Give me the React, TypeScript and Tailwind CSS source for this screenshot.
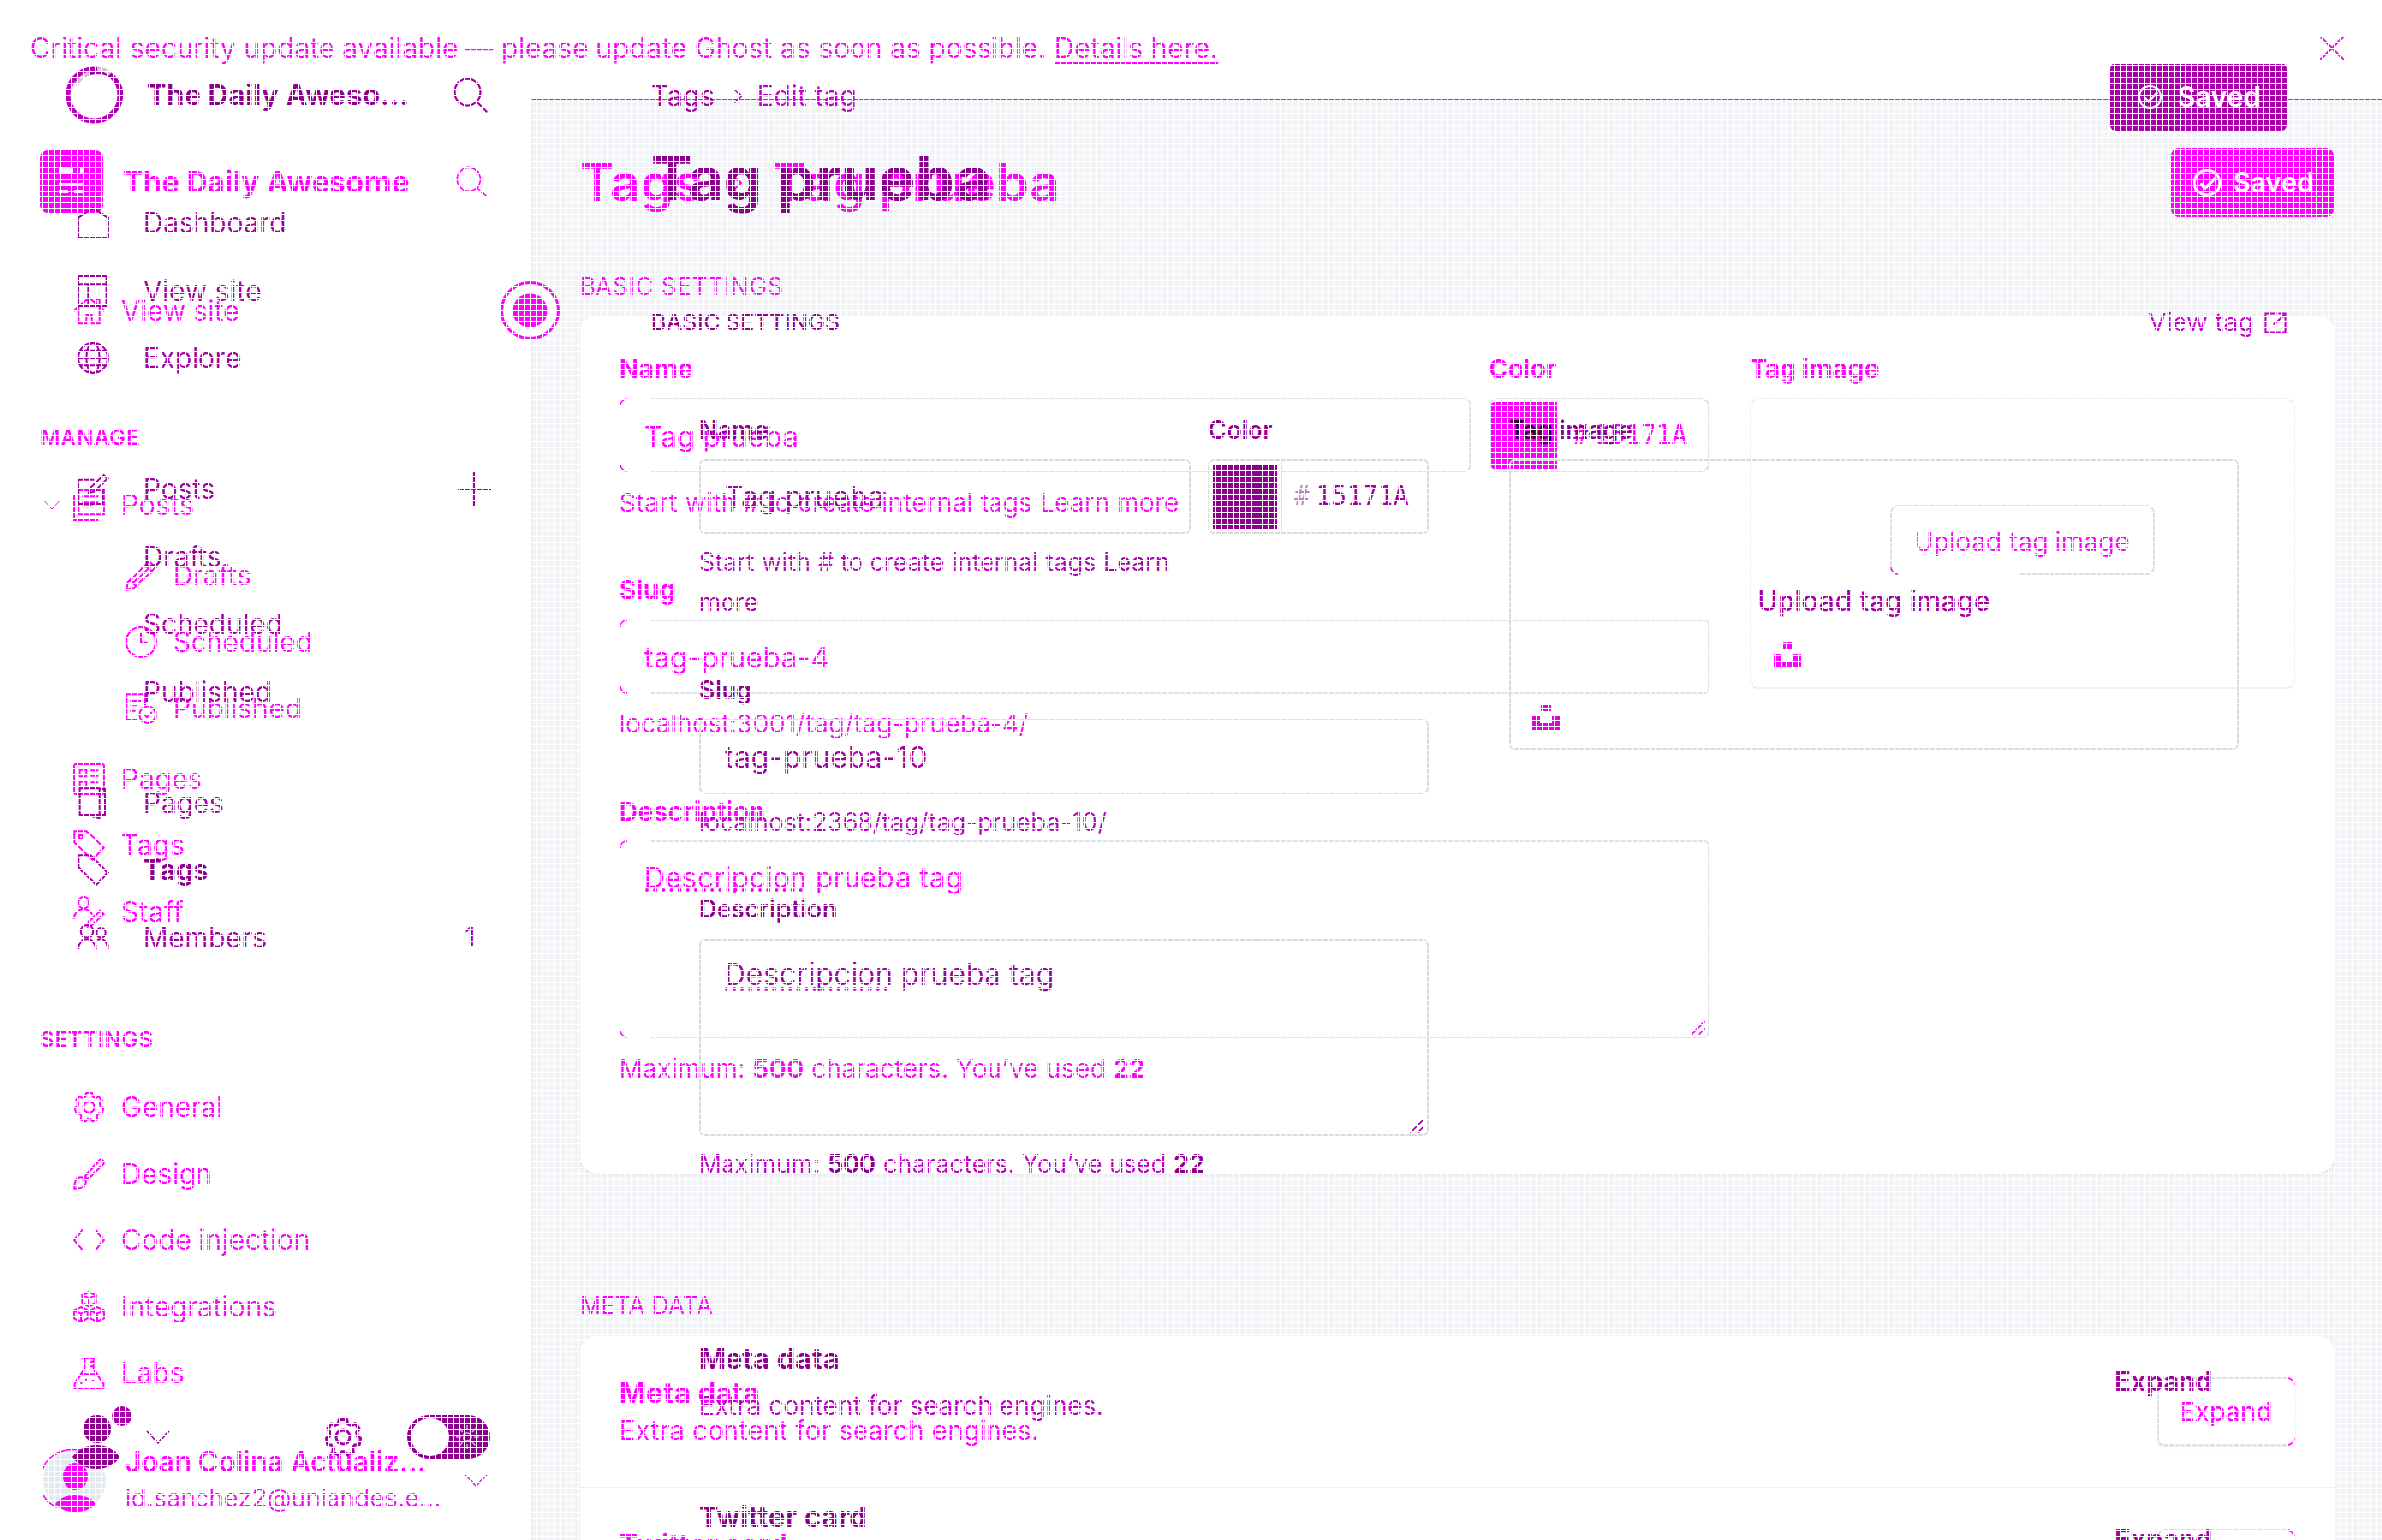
import React from "react";

type Kids = { children?: React.ReactNode };

function Icon({ children, className = "size-8", sw = 1.5 }: Kids & { className?: string; sw?: number }) {
  return (
    <svg viewBox="0 0 24 24" fill="none" stroke="currentColor" strokeWidth={sw} className={`shrink-0 ${className}`} aria-hidden="true">
      {children}
    </svg>
  );
}

const gearPath =
  "M9.8 1.5h4.4l.6 2.6 2.2 1 2.4-1.2 2.3 3.2-1.5 2 .4 2.3 2 1.3-.9 3.9-2.7.2-1.3 1.8.5 2.6-3.5 1.6-1.9-2h-1.6l-1.9 2-3.5-1.6.5-2.6-1.3-1.8-2.7-.2-.9-3.9 2-1.3.4-2.3-1.5-2 2.3-3.2 2.4 1.2 2.2-1z";

const icons = {
  search: <><circle cx="10" cy="10" r="9" /><path d="M16.500 16.500 23.500 23.500" /></>,
  home: <path d="M.8 8v15.200h22.400V8L12 .8z" />,
  house: <><path d="M.5 12 12 2l11.500 10" /><path d="M4 9.500V22h6v-7h4v7h6V9.500M17 6V3h3v5" /></>,
  layout: <><path d="M.8.8h21.400v22.400H.8zM.8 7h21.400M8.500 7v16" /></>,
  globe: <><circle cx="12" cy="12" r="11.200" /><ellipse cx="12" cy="12" rx="5" ry="11.200" /><path d="M1 12h22M2 6.500h20M2 17.500h20" /></>,
  compose: <><path d="M13 5H.8v18.200H19V12" /><path d="m9 15 1-4L20 1.500l3 2.500L13 14z" /></>,
  posts: <><path d="M4 .8h19.200V19H4zM.8 4v19.200H19M7 5.500h12M7 10h12M7 13h8" /></>,
  pencil: <><path d="M1 23l1-5.500L18 1l5 4.500L6.500 22zM4 16l4 4M15 4l5 4.500M6 18 19 5" /></>,
  clock: <><circle cx="12" cy="12" r="11.200" /><path d="M12 5v7.500h5" /></>,
  published: <><path d="M10 21H1V1h14v8M4 6h8M4 10h6M4 14h4" /><circle cx="17" cy="17" r="6.200" /><path d="m14.500 17 2 2 3.500-4" /></>,
  pagesList: <><rect x=".8" y=".8" width="22.400" height="22.400" rx="1.500" /><path d="M5 5h5v5H5zM5 14h5v5H5zM13 5.500h6M13 9.500h6M13 14.500h6M13 18.500h6" /></>,
  book: <><path d="M2 1h15v20H2z" /><path d="M8 21l9 2.500V21M17 1.500h4V21h-4" /></>,
  tag: <><path d="M1 1h9l13 13-8.500 9L1 10z" /></>,
  tagDot: <><path d="M1 1h9l13 13-8.500 9L1 10z" /><path d="M4.500 4.500h3v3h-3z" /></>,
  staff: <><circle cx="8" cy="5" r="4.200" /><path d="M.8 17c0-4 3-7 7-7 3 0 5.500 1.500 6.500 4M11 23l1-4 8.500-8 2.500 2.500-8.500 8z" /></>,
  members: <><circle cx="7.500" cy="7" r="4.700" /><circle cx="18" cy="8" r="3.500" /><path d="M.8 20.500c0-4.500 3-7.500 6.700-7.500s6.700 3 6.700 7.500M15 13.500c4.500-2 8.200 1.500 8.200 6.500" /></>,
  gear: <><path d={gearPath} strokeLinejoin="round" /><circle cx="12" cy="12" r="4.200" /></>,
  brush: <><path d="M1 23c0-5 1.500-8.500 5-8.500s4.500 4 2.500 6.500C7 23 4 23 1 23zM9 13.500 20 1.500c1-1 4 1 2.700 3L11 16z" /></>,
  code: <path d="M7.500 4 .8 12l6.700 8M16.500 4l6.700 8-6.700 8" />,
  blocks: <><path d="M12 .8 17 3v6l-5 2.500L7 9V3zM7 3l5 2.500L17 3M12 5.500v6M6 12l5 2.500v6L6 23.200.8 20.500v-6zM.8 14.500 6 17l5-2.500M6 17v6M18 12l5.200 2.500v6L18 23.200l-5-2.700v-6zM13 14.500l5 2.500 5.200-2.500M18 17v6" /></>,
  flask: <><path d="M6.500.8h11M8.500.8V9L1.200 20v3.200h21.600V20L15.500 9V.8M6 13h12M12 3.500h3M12 7h3M9 17h1.500M14 18h2M5.500 19.500H7" /></>,
  chevron: <path d="m1 6 11 12L23 6" />,
  check: <><circle cx="12" cy="12" r="11" /><path d="m6.500 12.500 4 4 9-9" /></>,
};

function Ring() {
  return (
    <svg viewBox="0 0 60 58" className="h-[58px] w-[60px] shrink-0" fill="none" stroke="#b800b8" aria-hidden="true">
      <circle cx="29" cy="29" r="26" strokeWidth="5" />
      <path d="M11 18C18 4 40 2 51 14c8 10 7 24-4 34" strokeWidth="4" stroke="#a000a8" />
      <path d="M32 3c6 0 10 2 13 5M12 18c3-6 7-9 12-11" strokeWidth="4" stroke="#d0c8d0" />
    </svg>
  );
}

function Arc({ className }: { className: string }) {
  return (
    <svg viewBox="0 0 8 8" className={`absolute size-2 ${className}`} fill="none" stroke="#ff00ff" strokeWidth="1.500" aria-hidden="true">
      <path d="M1 8C1 4 4 1 8 1" />
    </svg>
  );
}

function OpenFrame({ children, className }: Kids & { className: string }) {
  return (
    <div className={`relative flex ${className}`}>
      <div className="w-8 shrink-0" />
      <div className="flex-1 rounded-r-md border-2 border-l-0 border-[#dae3e9]" />
      <Arc className="left-0 top-0" />
      <Arc className="bottom-0 left-0 -scale-y-100" />
      {children}
    </div>
  );
}

function ARow({ icon, label, sub, chevron }: { icon: React.ReactNode; label: string; sub?: boolean; chevron?: boolean }) {
  return (
    <a href="#" className={`flex h-[67px] items-center gap-4 ${sub ? "pl-[126px]" : chevron ? "pl-11" : "pl-[74px]"}`}>
      {chevron && <Icon className="-mr-0.5 size-4" sw={1.5}>{icons.chevron}</Icon>}
      <Icon>{icon}</Icon>
      <span>{label}</span>
    </a>
  );
}

function BRow({ icon, label, bold, end }: { icon?: React.ReactNode; label: string; bold?: boolean; end?: React.ReactNode }) {
  return (
    <div className="flex h-[68px] items-center pl-[78px] pr-10">
      <a href="#" className="flex flex-1 items-center">
        <span className="w-[66px]">{icon && <Icon>{icon}</Icon>}</span>
        <span className={bold ? "font-bold text-[#8b008b]" : ""}>{label}</span>
      </a>
      {end}
    </div>
  );
}

function SidebarA() {
  return (
    <aside className="relative flex w-[535px] shrink-0 flex-col bg-white">
      <header className="mt-[51px] flex h-16 items-center pl-10 pr-11">
        <svg viewBox="0 0 64 64" className="size-16 shrink-0" aria-hidden="true">
          <rect width="64" height="64" rx="8" fill="#ff00ff" />
          <path d="M19 18h15v6H19zM41 18h3v6h-3zM19 33h25v2H19zM19 40h10v4H19zM35 40h9v4h-9z" fill="#f4f5f7" />
        </svg>
        <h2 className="ml-5 flex-1 whitespace-nowrap text-[30px] font-bold">The Daily Awesome</h2>
        <button aria-label="Search"><Icon sw={1.2}>{icons.search}</Icon></button>
      </header>
      <nav className="mt-16 text-[28px]">
        <ARow icon={icons.house} label="View site" />
        <h3 className="mb-[23px] mt-[82px] pl-10 text-[22px] font-semibold uppercase leading-6 tracking-wide">Manage</h3>
        <ARow icon={icons.posts} label="Posts" chevron />
        <div className="my-1">
          <ARow icon={icons.pencil} label="Drafts" sub />
          <ARow icon={icons.clock} label="Scheduled" sub />
          <ARow icon={icons.published} label="Published" sub />
        </div>
        <ARow icon={icons.pagesList} label="Pages" />
        <ARow icon={icons.tagDot} label="Tags" />
        <ARow icon={icons.staff} label="Staff" />
        <h3 className="mb-[23px] mt-[83px] pl-10 text-[22px] font-semibold uppercase leading-6 tracking-wide">Settings</h3>
        <ARow icon={icons.gear} label="General" />
        <ARow icon={icons.brush} label="Design" />
        <ARow icon={icons.code} label="Code injection" />
        <ARow icon={icons.blocks} label="Integrations" />
        <ARow icon={icons.flask} label="Labs" />
      </nav>
      <button className="mb-[23px] mt-auto flex items-center pl-[43px] pr-[43px] text-left">
        <svg viewBox="0 0 65 65" className="size-[65px] shrink-0" aria-hidden="true">
          <circle cx="32" cy="32" r="32" fill="#e4ebf0" />
          <path d="M40 1C-9-6-14 50 14 59" fill="none" stroke="#ff00ff" strokeWidth="1.500" />
          <ellipse cx="33" cy="28" rx="13" ry="14" fill="#ff00ff" />
          <path d="M12 56c8-12 34-12 42 0-10 11-32 11-42 0z" fill="#ff00ff" />
        </svg>
        <span className="ml-[18px] flex-1">
          <span className="block text-[28px] font-semibold leading-[37px]">Joan Colina Actualiz...</span>
          <span className="block text-[25px] leading-[37px]">id.sanchez2@uniandes.e...</span>
        </span>
        <Icon className="size-6" sw={1.5}>{icons.chevron}</Icon>
      </button>
      <svg viewBox="0 0 60 60" className="absolute right-[-29px] top-[183px] z-10 size-[60px]" aria-hidden="true">
        <circle cx="30" cy="30" r="28.500" fill="#fff" stroke="#ff00ff" strokeWidth="3" />
        <circle cx="30" cy="30" r="17.500" fill="#ff00ff" />
      </svg>
    </aside>
  );
}

const labelA = "block text-[26px] font-bold leading-[26px]";
const hintA = "mt-[18px] whitespace-nowrap text-[26px] leading-[26px]";
const fieldA = "absolute inset-0 size-full bg-transparent px-[25px] text-[29px] outline-none";

function MetaRowA({ title, text }: { title: string; text: string }) {
  return (
    <div className="flex items-start justify-between border-b-2 border-[#e8eef3] px-10 pb-[42px] pt-10">
      <div>
        <h4 className="text-[29px] font-bold leading-8">{title}</h4>
        <p className="mt-2 text-[27px] leading-7">{text}</p>
      </div>
      <button className="relative h-[69px] w-[139px] rounded-lg border-2 border-r-white border-[#dbe1e5] text-[26px] font-medium shadow-sm">
        Expand
        <Arc className="-right-0.5 -top-0.5 -scale-x-100" />
        <Arc className="-bottom-0.5 -right-0.5 rotate-180" />
      </button>
    </div>
  );
}

function MainA() {
  return (
    <main className="min-w-0 flex-1 border-l border-t border-l-[#e5e8ee] border-t-[#ff00ff] bg-[#f1f3f6] px-12">
      <header className="mt-12 flex h-[70px] items-center justify-between">
        <h1 className="flex items-center whitespace-nowrap text-[53px] font-semibold leading-[68px]">
          <a href="#">Tags</a>
          <Icon className="mx-[27px] size-4 -rotate-90" sw={3}>{icons.chevron}</Icon>
          Tag prueba
        </h1>
        <button className="flex h-[70px] w-[165px] items-center gap-3 rounded-lg bg-[#ff00ff] pl-[23px] text-[27px] font-semibold text-white">
          <Icon className="size-7" sw={2.5}>{icons.check}</Icon>Saved
        </button>
      </header>
      <h3 className="mt-[58px] text-[24px] uppercase leading-6 tracking-wide">Basic settings</h3>
      <section className="mt-[17px] grid grid-cols-[2fr_1fr] gap-10 rounded-2xl bg-white px-10 pb-[92px] pt-[41px] shadow-sm">
        <div>
          <div className="flex gap-[18px]">
            <div className="min-w-0 flex-1">
              <label htmlFor="a-name" className={labelA}>Name</label>
              <OpenFrame className="mt-4 h-[75px]">
                <input id="a-name" defaultValue="Tag prueba" className={`pt-0.5 ${fieldA}`} />
              </OpenFrame>
            </div>
            <div className="w-[223px]">
              <label htmlFor="a-color" className={labelA}>Color</label>
              <div className="mt-4 flex h-[75px] items-center rounded-lg border-2 border-[#dae3e9] font-['DejaVu_Sans_Mono',monospace] text-[26px]">
                <span className="mr-[3px] h-[68px] w-[67px] rounded-l bg-[#ff00ff]" />
                <span className="flex h-full items-center border-l border-[#dae3e9] pl-3">#</span>
                <input id="a-color" defaultValue="15171A" className="ml-1.5 w-24 bg-transparent outline-none" />
              </div>
            </div>
          </div>
          <p className={hintA}>Start with # to create internal tags <a href="#">Learn more</a></p>
          <label htmlFor="a-slug" className={`mt-[62px] ${labelA}`}>Slug</label>
          <OpenFrame className="mt-4 h-[75px]">
            <input id="a-slug" defaultValue="tag-prueba-4" className={`pt-0.5 ${fieldA}`} />
          </OpenFrame>
          <p className={hintA}>localhost:3001/tag/tag-prueba-4/</p>
          <label htmlFor="a-desc" className={`mt-[62px] ${labelA}`}>Description</label>
          <OpenFrame className="mt-4 h-[199px]">
            <textarea id="a-desc" defaultValue="Descripcion prueba tag" spellCheck={false} className={`resize-none pt-[19px] leading-[38px] ${fieldA}`} />
            <span className="absolute left-[26px] top-[48px] w-[159px] border-b-4 border-dotted border-[#ff00ff]" />
            <Icon className="absolute bottom-0.5 right-1 size-4" sw={2.5}><path d="M2 22 22 2M13 22l9-9" /></Icon>
          </OpenFrame>
          <p className={hintA}>Maximum: <b className="font-bold">500</b> characters. You’ve used <b className="font-bold">22</b></p>
        </div>
        <div>
          <h4 className={labelA}>Tag image</h4>
          <div className="relative mt-4 flex h-[293px] justify-center rounded-lg border-2 border-[#e8eef3]">
            <button className="relative mt-[106px] h-[70px] w-[267px] rounded-lg border-2 border-[#d8e0e6] pt-0.5 text-[26px]">
              Upload tag image
              <span className="absolute -bottom-0.5 -left-0.5 h-2 w-[130px] bg-white" />
              <Arc className="-bottom-0.5 -left-0.5 -scale-y-100" />
            </button>
            <svg viewBox="0 0 28 26" className="absolute bottom-[19px] left-[22px] h-[26px] w-7" fill="#ff00ff" aria-hidden="true">
              <path d="M9 0h10v7H9zM0 12h8v7h12v-7h8v14H0z" />
            </svg>
          </div>
        </div>
      </section>
      <h3 className="mt-[122px] text-[24px] uppercase leading-6">Meta data</h3>
      <section className="mt-[18px] rounded-t-2xl bg-white pt-0.5 shadow-sm">
        <MetaRowA title="Meta data" text="Extra content for search engines." />
        <MetaRowA title="Twitter card" text="Customized structured data for Twitter" />
      </section>
    </main>
  );
}

function SidebarB() {
  return (
    <aside className="flex w-[535px] shrink-0 flex-col text-[#a000a0]">
      <header className="mt-[67px] flex h-[58px] items-center pl-[66px] pr-[43px]">
        <Ring />
        <h2 className="ml-[22px] flex-1 whitespace-nowrap text-[29px] font-bold text-[#8b008b]">The Daily Aweso...</h2>
        <button aria-label="Search"><Icon className="size-9">{icons.search}</Icon></button>
      </header>
      <nav className="mt-[66px] text-[28px]">
        <BRow icon={icons.home} label="Dashboard" />
        <BRow icon={icons.layout} label="View site" />
        <BRow icon={icons.globe} label="Explore" />
        <div className="mb-11 mt-16">
          <BRow
            icon={icons.compose}
            label="Posts"
            end={<button aria-label="New post"><Icon className="size-[34px]" sw={1.5}><path d="M12 0v24M0 12h24" /></Icon></button>}
          />
          <BRow label="Drafts" />
          <BRow label="Scheduled" />
          <BRow label="Published" />
        </div>
        <BRow icon={icons.book} label="Pages" />
        <BRow icon={icons.tag} label="Tags" bold />
        <BRow icon={icons.members} label="Members" end={<span className="mr-4 text-[25px] font-medium">1</span>} />
      </nav>
      <footer className="mb-[72px] mt-auto flex h-16 items-center pl-[73px] text-[#8b008b]">
        <button className="flex items-center" aria-label="Account menu">
          <svg viewBox="0 0 62 64" className="h-16 w-[62px]" fill="currentColor" aria-hidden="true">
            <circle cx="25" cy="24" r="14" />
            <circle cx="50" cy="11" r="10" fill="#a800a8" />
            <path d="M0 52c12-16 37-16 48 0-11 16-36 16-48 0z" />
          </svg>
          <Icon className="ml-3 size-6" sw={1.5}>{icons.chevron}</Icon>
        </button>
        <button aria-label="Settings" className="ml-[155px]"><Icon className="size-10 text-[#a000a0]" sw={1.8}>{icons.gear}</Icon></button>
        <label className="relative ml-11 flex h-11 w-[84px] items-center rounded-full bg-[#8b008b]">
          <input type="checkbox" role="switch" aria-label="Dark mode" className="peer absolute inset-0 appearance-none" />
          <span className="ml-1 size-[38px] rounded-full bg-white" />
          <Icon className="ml-[7px] size-6 text-[#d8b0d8]" sw={1.5}>
            <circle cx="12" cy="12" r="4" />
            <path d="M12 0v5M12 19v5M0 12h5M19 12h5M3.500 3.500 7 7M17 17l3.500 3.500M3.500 20.500 7 17M17 7l3.500-3.500" />
          </Icon>
        </label>
      </footer>
    </aside>
  );
}

const labelB = "block text-[25px] font-semibold leading-[26px] text-[#8b008b]";
const hintB = "mt-2 text-[25px] leading-[41px] text-[#b800c0]";
const fieldB = "mt-[17px] block h-[75px] w-full rounded-md border-2 border-[#dcdcdc] bg-transparent px-6 text-[30px] text-[#a000a0] outline-none";

function MetaRowB({ title, text }: { title: string; text: string }) {
  return (
    <div className="flex h-[159px] items-start justify-between">
      <div>
        <h4 className="text-[29px] font-bold leading-8 text-[#8b008b]">{title}</h4>
        <p className="mt-[17px] text-[26px] leading-7 text-[#b800c0]">{text}</p>
      </div>
      <button className="mr-[27px] mt-[23px] text-[27px] font-bold leading-8">Expand</button>
    </div>
  );
}

function MainB() {
  return (
    <main className="min-w-0 flex-1 pl-[121px] pr-24 pt-16 text-[#a000a0]">
      <header className="flex h-[68px] items-center justify-between">
        <nav className="flex items-center pb-0.5 text-[28px]">
          <a href="#">Tags</a>
          <Icon className="ml-[17px] mr-3 size-[14px] -rotate-90" sw={2.5}>{icons.chevron}</Icon>
          <span className="text-[#c000c8]">Edit tag</span>
        </nav>
        <button className="flex h-[68px] w-[178px] items-center gap-4 rounded-md bg-[#a800a8] pl-7 text-[28px] font-semibold text-white">
          <Icon className="size-6" sw={2}>{icons.check}</Icon>Saved
        </button>
      </header>
      <h1 className="mt-[17px] whitespace-nowrap text-[62px] font-bold leading-[62px] text-[#8b008b]">Tag prueba</h1>
      <div className="mt-[102px] flex items-center justify-between leading-6">
        <h3 className="text-[23px] font-medium uppercase text-[#8b008b]">Basic settings</h3>
        <a href="#" className="flex items-center gap-2.5 text-[26px] text-[#c000c8]">
          View tag
          <Icon className="size-[23px]" sw={2.2}><path d="M13 1.500H1.500v21h21V11M15 1.500h7.500V9M22 2 10 14" /></Icon>
        </a>
      </div>
      <section className="px-12">
        <div className="mt-[83px] grid grid-cols-2 gap-20">
          <div>
            <div className="flex gap-[17px]">
              <div className="min-w-0 flex-1">
                <label htmlFor="b-name" className={labelB}>Name</label>
                <input id="b-name" defaultValue="Tag prueba" className={fieldB} />
                <p className={hintB}>Start with # to create internal tags <a href="#" className="text-[#a000a0]">Learn more</a></p>
              </div>
              <div className="w-[223px]">
                <label htmlFor="b-color" className={labelB}>Color</label>
                <div className="mt-[17px] flex h-[75px] items-center rounded-md border-2 border-[#dcdcdc] font-['DejaVu_Sans_Mono',monospace] text-[26px]">
                  <span className="ml-[3px] mr-1 h-16 w-[65px] bg-[#8b008b]" />
                  <span className="flex h-full items-center border-l border-[#dcdcdc] pl-3 text-[#c080c0]">#</span>
                  <input id="b-color" defaultValue="15171A" className="ml-1.5 w-24 bg-transparent outline-none" />
                </div>
              </div>
            </div>
            <label htmlFor="b-slug" className={`mt-[54px] ${labelB}`}>Slug</label>
            <input id="b-slug" defaultValue="tag-prueba-10" className={fieldB} />
            <p className={hintB}>localhost:2368/tag/tag-prueba-10/</p>
            <label htmlFor="b-desc" className={`mt-[54px] ${labelB}`}>Description</label>
            <div className="relative mt-[17px] h-[199px]">
              <textarea id="b-desc" defaultValue="Descripcion prueba tag" spellCheck={false} className="block size-full resize-none rounded-md border-2 border-[#dcdcdc] bg-transparent px-6 pt-[15px] text-[30px] leading-[38px] outline-none" />
              <span className="absolute left-[26px] top-[49px] w-[165px] border-b-4 border-dotted border-[#e000e0]" />
              <Icon className="absolute bottom-0.5 right-1 size-4" sw={2.5}><path d="M2 22 22 2M13 22l9-9" /></Icon>
            </div>
            <p className={hintB}>Maximum: <b className="font-bold text-[#8b008b]">500</b> characters. You’ve used <b className="font-bold text-[#8b008b]">22</b></p>
          </div>
          <div>
            <h4 className={labelB}><span className="text-[#240024]">Tag</span> image</h4>
            <div className="relative mt-[17px] h-[293px] rounded-md border-2 border-[#dcdcdc] pt-[120px] text-center text-[28px]">
              <button className="font-medium leading-8">Upload tag image</button>
              <svg viewBox="0 0 28 26" className="absolute bottom-[18px] left-[22px] h-[26px] w-7" fill="#e000e0" aria-hidden="true">
                <path d="M9 0h10v7H9zM0 12h8v7h12v-7h8v14H0z" />
              </svg>
            </div>
          </div>
        </div>
        <div className="mt-40">
          <MetaRowB title="Meta data" text="Extra content for search engines." />
          <MetaRowB title="Twitter card" text="Customized structured data for Twitter" />
        </div>
      </section>
    </main>
  );
}

export default function App() {
  return (
    <div className="relative grid h-screen grid-cols-1 grid-rows-1 overflow-hidden bg-white font-['Inter',sans-serif]">
      <div className="col-start-1 row-start-1 flex h-screen flex-col text-[#ff00ff]">
        <div className="flex h-[100px] shrink-0 items-center justify-between pb-1 pl-[30px] pr-[38px] text-[28px]">
          <p>Critical security update available — please update Ghost as soon as possible. <a href="#" className="underline underline-offset-4">Details here.</a></p>
          <button aria-label="Dismiss"><Icon className="size-6" sw={2}><path d="m0 0 24 24M24 0 0 24" /></Icon></button>
        </div>
        <div className="flex min-h-0 flex-1">
          <SidebarA />
          <MainA />
        </div>
      </div>
      <div className="z-10 col-start-1 row-start-1 flex h-screen">
        <SidebarB />
        <MainB />
      </div>
      <div className="pointer-events-none absolute inset-0 z-20 bg-[linear-gradient(to_right,white_1px,transparent_1px),linear-gradient(to_bottom,white_1px,transparent_1px)] bg-[size:6px_6px]" />
    </div>
  );
}
